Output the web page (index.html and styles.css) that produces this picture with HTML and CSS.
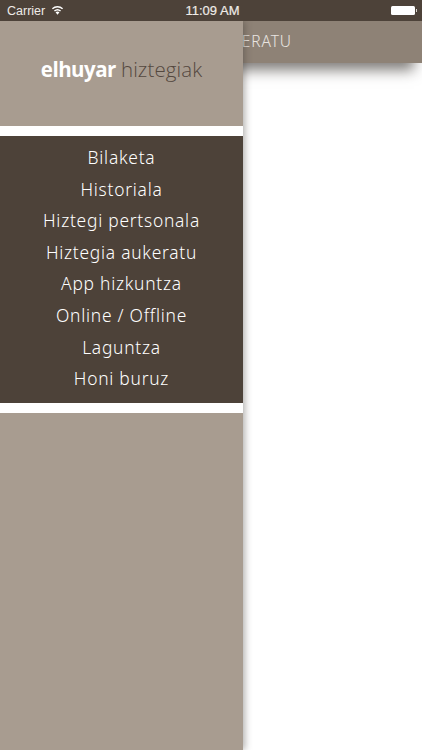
FILE: index.html
```html
<!DOCTYPE html>
<html lang="eu">
<head>
<meta charset="utf-8">
<title>elhuyar hiztegiak</title>
<link rel="stylesheet" href="styles.css">
</head>
<body>
<div class="screen">
  <div class="status">
    <div class="status-left">
      <span>Carrier</span>
      <svg class="wifi" width="13" height="10" viewBox="0 0 14 10"><path d="M7 10 4.9 7.5a3.2 3.2 0 0 1 4.2 0z" fill="#fff"/><path d="M3.7 6.1a5 5 0 0 1 6.6 0" fill="none" stroke="#fff" stroke-width="1.5"/><path d="M1.5 3.6a8.3 8.3 0 0 1 11 0" fill="none" stroke="#fff" stroke-width="1.5"/></svg>
    </div>
    <div class="status-time">11:09 AM</div>
    <div class="status-right">
      <span class="battery"></span><span class="battery-tip"></span>
    </div>
  </div>
  <div class="main">
    <header class="navbar"><span class="nav-title">HIZTEGIA AUKERATU</span></header>
    <aside class="drawer">
      <div class="brand"><b>elhuyar</b> <span>hiztegiak</span></div>
      <nav class="menu">
        <a>Bilaketa</a>
        <a>Historiala</a>
        <a>Hiztegi pertsonala</a>
        <a>Hiztegia aukeratu</a>
        <a>App hizkuntza</a>
        <a>Online / Offline</a>
        <a>Laguntza</a>
        <a>Honi buruz</a>
      </nav>
      <div class="drawer-rest"></div>
    </aside>
  </div>
</div>
</body>
</html>
```
FILE: styles.css
```css
* { box-sizing: border-box; }
html, body { margin: 0; height: 100%; background: #fff; overflow: hidden; }
body { font-family: "Noto Sans", sans-serif; }
.screen { width: 422px; height: 750px; display: flex; flex-direction: column; overflow: hidden; }
.status {
  position: relative; z-index: 2;
  height: 21px; flex: none; background: #4d4239; color: #efebe7;
  display: grid; grid-template-columns: 1fr auto 1fr; align-items: center;
  padding: 0 5px 0 7px; font-family: "Liberation Sans", sans-serif; font-size: 12.5px;
}
.status-left { display: flex; align-items: center; gap: 6px; }
.wifi { margin-top: -1px; }
.status-time { font-size: 13px; font-weight: 500; -webkit-text-stroke: .2px #efebe7; margin-left: 1px; }
.status-right { display: flex; justify-content: flex-end; align-items: center; }
.battery { width: 24px; height: 9px; background: #fff; border-radius: 1.5px; }
.battery-tip { width: 1.5px; height: 3px; background: #d8d4d0; margin-left: 1px; }
.main { position: relative; flex: 1; }
.navbar {
  height: 42px; background: #8e8276; color: #e9e5e1; padding-bottom: 3px;
  display: flex; align-items: center; justify-content: center;
  box-shadow: -8px 7px 13px rgba(40, 35, 30, .6);
}
.nav-title { font-size: 15.5px; letter-spacing: .9px; font-weight: 300; }
.drawer {
  position: absolute; top: 0; left: 0; bottom: 0; width: 243px;
  background: #fff; display: flex; flex-direction: column;
  box-shadow: 2px 0 7px rgba(60, 55, 50, .4);
}
.brand {
  height: 105px; background: #a89c90; display: flex; align-items: center; justify-content: center;
  gap: 5px; font-family: "Open Sans", sans-serif; font-size: 20.5px; padding-bottom: 9px;
}
.brand b { color: #fff; font-weight: 700; letter-spacing: -.5px; }
.brand span { color: #54483f; font-weight: 300; letter-spacing: .1px; }
.menu {
  margin-top: 10px; height: 267px; background: #4d4239; padding: 6px 0 8.4px;
  display: flex; flex-direction: column;
}
.menu a {
  flex: 1; display: flex; align-items: center; justify-content: center;
  color: #fff; font-size: 17.4px; font-weight: 300; letter-spacing: .75px; line-height: 1;
}
.drawer-rest { margin-top: 10px; flex: 1; background: #a89c90; }
```
